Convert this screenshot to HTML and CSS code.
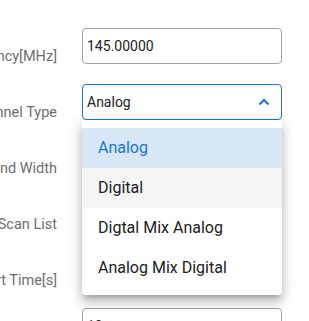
FILE: index.html
```
<!DOCTYPE html>
<html>
<head>
<meta charset="utf-8">
<link rel="stylesheet" href="styles.css">
</head>
<body>
<div class="form">
  <div class="row">
    <div class="label"><span>Frequency[MHz]</span></div>
    <div class="control"><div class="input">145.00000</div></div>
  </div>
  <div class="row">
    <div class="label"><span>Channel Type</span></div>
    <div class="control">
      <div class="input select">
        <span>Analog</span>
        <svg class="chev" width="12" height="8" viewBox="0 0 12 8"><path d="M1.5 6.5 L6 2 L10.5 6.5" fill="none" stroke="#1976d2" stroke-width="2"/></svg>
      </div>
      <div class="menu">
        <div class="item active">Analog</div>
        <div class="item hover">Digital</div>
        <div class="item">Digtal Mix Analog</div>
        <div class="item">Analog Mix Digital</div>
      </div>
    </div>
  </div>
  <div class="row">
    <div class="label"><span>Band Width</span></div>
    <div class="control"><div class="input">12.5K</div></div>
  </div>
  <div class="row">
    <div class="label"><span>Scan List</span></div>
    <div class="control"><div class="input">None</div></div>
  </div>
  <div class="row">
    <div class="label"><span>Alert Time[s]</span></div>
    <div class="control"><div class="input">60</div></div>
  </div>
  <div class="row">
    <div class="label"><span>Delay Time[s]</span></div>
    <div class="control"><div class="input">10</div></div>
  </div>
</div>
</body>
</html>
```
FILE: styles.css
```
html, body {
  margin: 0;
  padding: 0;
  background: #fff;
  overflow: hidden;
}
body {
  font-family: Roboto, "Noto Sans", Arial, sans-serif;
  width: 309px;
  height: 321px;
}
.form {
  padding-top: 28px;
  display: flex;
  flex-direction: column;
  gap: 20px;
}
.row {
  display: flex;
  gap: 25px;
  height: 36px;
}
.label {
  width: 57px;
  flex: none;
  display: flex;
  justify-content: flex-end;
  white-space: nowrap;
  font-size: 14.5px;
  line-height: 20px;
  padding-top: 19px;
  color: #6e6e6e;
}
.control {
  position: relative;
  width: 200px;
  flex: none;
}
.input {
  box-sizing: border-box;
  height: 36px;
  border: 1px solid #a3a3a3;
  border-radius: 4px;
  padding: 0 4px;
  font-size: 14px;
  line-height: 34px;
  color: #222;
  display: flex;
  align-items: center;
}
.select {
  border-color: #1976d2;
  justify-content: space-between;
}
.chev {
  margin-right: 7px;
}
.menu {
  position: absolute;
  top: 36px;
  left: 0;
  width: 200px;
  box-sizing: border-box;
  padding: 8px 0 7px;
  background: #fff;
  border-radius: 4px;
  box-shadow: 0 5px 5px -3px rgba(0,0,0,.2), 0 8px 10px 1px rgba(0,0,0,.14), 0 3px 14px 2px rgba(0,0,0,.12);
  z-index: 5;
}
.item {
  height: 40px;
  line-height: 40px;
  padding: 0 16px;
  font-size: 16px;
  color: #212121;
}
.item.active {
  background: #d8e7f6;
  color: #1976d2;
}
.item.hover {
  background: #f5f5f5;
}
```
